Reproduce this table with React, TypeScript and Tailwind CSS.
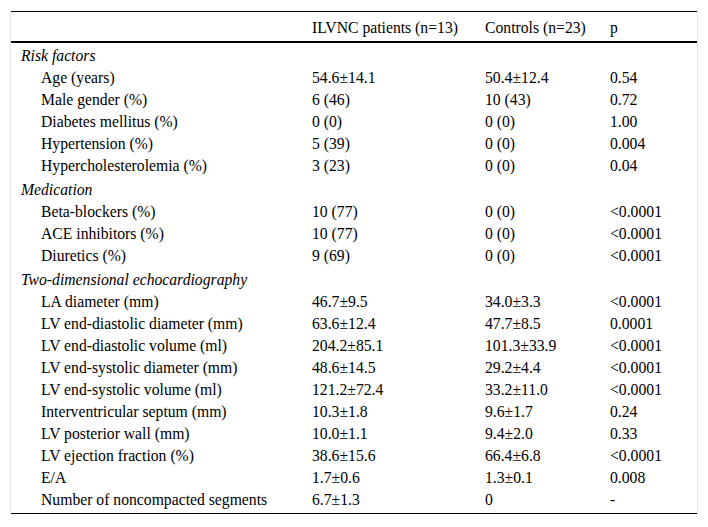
const sections: { title: string; rows: [string, string, string, string][] }[] = [
  {
    title: 'Risk factors',
    rows: [
      ['Age (years)', '54.6±14.1', '50.4±12.4', '0.54'],
      ['Male gender (%)', '6 (46)', '10 (43)', '0.72'],
      ['Diabetes mellitus (%)', '0 (0)', '0 (0)', '1.00'],
      ['Hypertension (%)', '5 (39)', '0 (0)', '0.004'],
      ['Hypercholesterolemia (%)', '3 (23)', '0 (0)', '0.04'],
    ],
  },
  {
    title: 'Medication',
    rows: [
      ['Beta-blockers (%)', '10 (77)', '0 (0)', '<0.0001'],
      ['ACE inhibitors (%)', '10 (77)', '0 (0)', '<0.0001'],
      ['Diuretics (%)', '9 (69)', '0 (0)', '<0.0001'],
    ],
  },
  {
    title: 'Two-dimensional echocardiography',
    rows: [
      ['LA diameter (mm)', '46.7±9.5', '34.0±3.3', '<0.0001'],
      ['LV end-diastolic diameter (mm)', '63.6±12.4', '47.7±8.5', '0.0001'],
      ['LV end-diastolic volume (ml)', '204.2±85.1', '101.3±33.9', '<0.0001'],
      ['LV end-systolic diameter (mm)', '48.6±14.5', '29.2±4.4', '<0.0001'],
      ['LV end-systolic volume (ml)', '121.2±72.4', '33.2±11.0', '<0.0001'],
      ['Interventricular septum (mm)', '10.3±1.8', '9.6±1.7', '0.24'],
      ['LV posterior wall (mm)', '10.0±1.1', '9.4±2.0', '0.33'],
      ['LV ejection fraction (%)', '38.6±15.6', '66.4±6.8', '<0.0001'],
      ['E/A', '1.7±0.6', '1.3±0.1', '0.008'],
      ['Number of noncompacted segments', '6.7±1.3', '0', '-'],
    ],
  },
]

export default function App() {
  return (
    <div className="w-[708px] h-[527px] bg-white pt-[11px] pl-[10px] font-[family-name:Liberation_Serif,serif] text-[15.7px] text-black">
      <div className="w-[688px] border-x border-[#e6e6e6]">
        <table className="w-[686px] border-collapse table-fixed">
          <colgroup>
            <col className="w-[291px]" />
            <col className="w-[173px]" />
            <col className="w-[125px]" />
            <col className="w-[97px]" />
          </colgroup>
          <thead>
            <tr className="h-[30px] border-t border-black border-b-2 leading-[18px]">
              <th className="font-normal text-left pl-[10px] pt-[4px]"></th>
              <th className="font-normal text-left pl-[10px] pt-[4px]">ILVNC patients (n=13)</th>
              <th className="font-normal text-left pl-[10px] pt-[4px]">Controls (n=23)</th>
              <th className="font-normal text-left pl-[10px] pt-[4px]">p</th>
            </tr>
          </thead>
          <tbody className="leading-[18px]">
            {sections.map((section, sectionIndex) => (
              <>
                <tr key={section.title} className={sectionIndex === 0 ? 'h-[22px]' : 'h-[24px]'}>
                  <td colSpan={4} className="pl-[10px] pt-[4px] italic align-bottom">
                    {section.title}
                  </td>
                </tr>
                {section.rows.map((row, rowIndex) => {
                  const isLast =
                    sectionIndex === sections.length - 1 && rowIndex === section.rows.length - 1
                  return (
                    <tr
                      key={row[0]}
                      className={isLast ? 'h-[27px] border-b border-black align-top' : 'h-[22px]'}
                    >
                      <td className="pl-[30px] pt-[4px]">{row[0]}</td>
                      <td className="pl-[10px] pt-[4px]">{row[1]}</td>
                      <td className="pl-[10px] pt-[4px]">{row[2]}</td>
                      <td className="pl-[10px] pt-[4px]">{row[3]}</td>
                    </tr>
                  )
                })}
              </>
            ))}
          </tbody>
        </table>
      </div>
    </div>
  )
}
